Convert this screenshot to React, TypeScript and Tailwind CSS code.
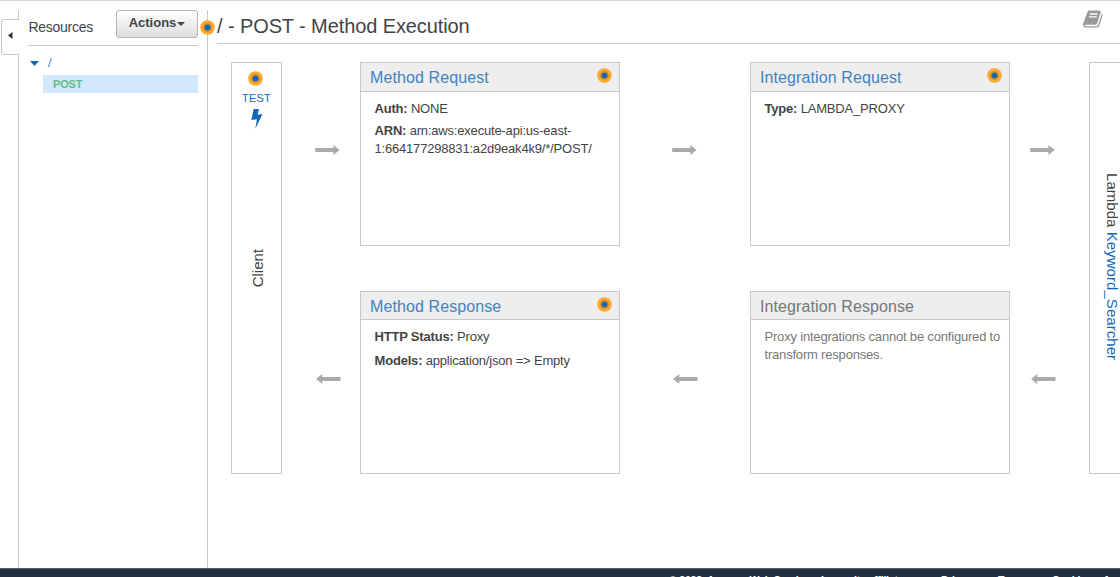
import type { ReactNode } from "react";

function Beacon() {
  return (
    <svg className="block h-[15px] w-[15px] shrink-0" viewBox="0 0 15 15">
      <circle cx="7.5" cy="7.5" r="7.3" fill="#fba930" />
      <circle cx="7.5" cy="7.5" r="4.4" fill="#c98a2c" />
      <circle cx="7.5" cy="7.5" r="2.8" fill="#1166bb" />
    </svg>
  );
}

function Arrow({ left = false }: { left?: boolean }) {
  return (
    <svg className="block h-[10px] w-[25px] shrink-0" viewBox="0 0 25 10">
      <path
        d={left ? "M0 5 6.3 0V3H24.5V7H6.3V10Z" : "M24.7 5 18.4 0V3H.2V7H18.4V10Z"}
        fill="#aaa"
      />
    </svg>
  );
}

function BookIcon() {
  return (
    <svg className="block h-5 w-[21px]" viewBox="0 0 1792 1792" preserveAspectRatio="none" fill="#999">
      <path d="M1639 478q40 57 18 129l-275 906q-19 64-76.5 107.5t-122.5 43.5h-923q-77 0-148.5-53.5t-99.5-131.5q-24-67-2-127 0-4 3-27t4-37q1-8-3-21.5t-3-19.5q2-11 8-21t16.5-23.5 16.5-23.5q23-38 45-91.5t30-91.5q3-10 .5-30t-.5-28q3-11 17-28t17-23q21-36 42-92t25-90q1-9-2.5-32t.5-28q4-13 22-30.5t22-22.5q19-26 42.5-84.5t27.5-96.5q1-8-3-25.5t-2-26.5q2-8 9-18t18-23 17-21q8-12 16.5-30.5t15-35 16-36 19.5-32 26.5-23.5 36-11.5 47.5 5.5l-1 3q38-9 51-9h761q74 0 114 56t18 130l-274 906q-36 119-71.5 153.5t-128.5 34.5h-869q-27 0-38 15-11 16-1 43 24 70 144 70h923q29 0 56-15.5t35-41.5l300-987q7-22 5-57 38 15 59 43zm-1064 2q-4 13 2 22.5t20 9.5h608q13 0 25.5-9.5t16.5-22.5l21-64q4-13-2-22.5t-20-9.5h-608q-13 0-25.5 9.5t-16.5 22.5zm-83 256q-4 13 2 22.5t20 9.5h608q13 0 25.5-9.5t16.5-22.5l21-64q4-13-2-22.5t-20-9.5h-608q-13 0-25.5 9.5t-16.5 22.5z" />
    </svg>
  );
}

function Card({
  title,
  muted = false,
  short = false,
  children,
}: {
  title: string;
  muted?: boolean;
  short?: boolean;
  children: ReactNode;
}) {
  return (
    <section
      className={`flex w-[260px] flex-col border border-[#c8c8c8] ${short ? "h-[183px]" : "h-[184px]"}`}
    >
      <header
        className={`flex shrink-0 justify-between border-b border-[#c8c8c8] bg-[#eee] pr-[7px] pl-[9px] ${short ? "h-7" : "h-[29px]"}`}
      >
        <h2
          className={`pt-[3px] text-[16px] leading-6 tracking-[0.1px] ${muted ? "text-[#777]" : "text-[#4183c4]"}`}
        >
          {title}
        </h2>
        {!muted && (
          <div className="pt-[5px]">
            <Beacon />
          </div>
        )}
      </header>
      <div
        className={`flex flex-col pt-2 pl-[13.5px] text-[13px] leading-[18px] tracking-[-0.19px] ${short ? "gap-[6px]" : "gap-1"} ${muted ? "text-[#777]" : "text-[#444]"}`}
      >
        {children}
      </div>
    </section>
  );
}

export default function App() {
  return (
    <div className="flex h-[577px] w-[1120px] flex-col overflow-hidden border-t border-[#d5d5d5] bg-white font-['Liberation_Sans',Arial,sans-serif] text-[#444]">
      <div className="flex h-[567px] shrink-0 pt-[9px]">
        <div className="flex w-[19px] shrink-0 flex-col">
          <div className="h-[9px] border-r border-[#c8c8c8]" />
          <button className="ml-px flex h-9 items-center rounded-l-[3px] border border-r-0 border-[#c8c8c8] pl-[6px]">
            <svg className="-mt-1 h-[7px] w-[5px]" viewBox="0 0 5 7">
              <path d="M0 3.5 4.5 0V7Z" fill="#333" />
            </svg>
          </button>
          <div className="grow border-r border-[#c8c8c8]" />
        </div>

        <aside className="w-[189px] shrink-0 border-r border-[#c8c8c8] pr-[9px] pl-[9px]">
          <div className="flex h-9 items-start justify-between border-b border-[#c8c8c8]">
            <span className="pt-[7px] pl-[0.5px] text-[14px] leading-5 tracking-[-0.28px]">
              Resources
            </span>
            <button className="flex h-7 w-[82px] items-start justify-center rounded-[3px] border border-[#b5b5b5] bg-linear-to-b from-white to-[#dedede] pt-[3px] text-[13px] leading-[18px] font-bold">
              Actions
              <svg className="mt-2 ml-px h-1 w-2" viewBox="0 0 8 4">
                <path d="M0 0H8L4 4Z" fill="#444" />
              </svg>
            </button>
          </div>
          <div className="flex h-[29px] items-center gap-[9px] pt-[5px] pl-[2px] text-[13px] text-[#4183c4]">
            <svg className="h-[5px] w-[9px]" viewBox="0 0 9 5">
              <path d="M0 0H9L4.5 5Z" fill="#1166bb" />
            </svg>
            /
          </div>
          <div className="ml-[15px] flex h-[18px] items-center bg-[#d1e8ff] pl-[10px] text-[11px] font-bold tracking-[-0.2px] text-[#5fbf83]">
            POST
          </div>
        </aside>

        <main className="flex min-w-0 grow flex-col">
          <div className="relative ml-[9px] flex h-[34px] shrink-0 justify-between border-b border-[#c8c8c8] pr-4">
            <h1 className="pt-1 text-[20px] leading-6 tracking-[-0.1px] whitespace-nowrap">
              / - POST - Method Execution
            </h1>
            <div className="-mt-[1px]">
              <BookIcon />
            </div>
            <div className="absolute top-[10px] -left-[17px]">
              <Beacon />
            </div>
          </div>

          <div className="mt-[18px] flex h-[412px] pl-[23px]">
            <section className="flex w-[51px] shrink-0 flex-col items-center border border-[#c8c8c8] pt-2">
              <div className="-ml-[2px]">
                <Beacon />
              </div>
              <span className="mt-1 text-[11px] leading-4 tracking-[0.2px] text-[#1166bb]">
                TEST
              </span>
              <svg className="mt-[3px] h-5 w-[12px]" viewBox="0 0 12 20">
                <path d="M2.6 0H8L6.6 5.8 11.5 5 4.2 20 6 10.2.4 11Z" fill="#1166bb" />
              </svg>
              <span className="mt-[120px] ml-[2px] rotate-180 text-[15px] leading-4 [writing-mode:vertical-rl]">
                Client
              </span>
            </section>

            <div className="flex w-[78px] shrink-0 flex-col items-start gap-[219px] pt-[83px] pl-[33px]">
              <Arrow />
              <div className="pl-px">
                <Arrow left />
              </div>
            </div>

            <div className="flex shrink-0 flex-col justify-between">
              <Card title="Method Request">
                <p>
                  <b>Auth:</b> NONE
                </p>
                <p>
                  <b>ARN:</b> arn:aws:execute-api:us-east-
                  <br />
                  1:664177298831:a2d9eak4k9/*/POST/
                </p>
              </Card>
              <Card title="Method Response" short>
                <p>
                  <b>HTTP Status:</b> Proxy
                </p>
                <p>
                  <b>Models:</b> application/json =&gt; Empty
                </p>
              </Card>
            </div>

            <div className="flex w-[130px] shrink-0 flex-col items-start gap-[219px] pt-[83px] pl-[52px]">
              <Arrow />
              <div className="pl-px">
                <Arrow left />
              </div>
            </div>

            <div className="flex shrink-0 flex-col justify-between">
              <Card title="Integration Request">
                <p>
                  <b>Type:</b> LAMBDA_PROXY
                </p>
              </Card>
              <Card title="Integration Response" muted short>
                <p>
                  Proxy integrations cannot be configured to
                  <br />
                  transform responses.
                </p>
              </Card>
            </div>

            <div className="flex w-[79px] shrink-0 flex-col items-start gap-[219px] pt-[83px] pl-5">
              <Arrow />
              <div className="pl-px">
                <Arrow left />
              </div>
            </div>

            <section className="w-[51px] shrink-0 border border-[#c8c8c8] pt-[110px] pl-[14px]">
              <span className="text-[15px] leading-4 tracking-[0.05px] whitespace-nowrap [writing-mode:vertical-rl]">
                Lambda <span className="text-[#1166bb]">Keyword_Searcher</span>
              </span>
            </section>
          </div>
        </main>
      </div>

      <footer className="flex h-[30px] shrink-0 border-t border-[#555f6b] bg-[#232f3e] pt-1 pl-[669px] text-[10.5px] leading-[14px] font-bold whitespace-nowrap text-white">
        <span className="w-[272px] shrink-0 tracking-[-0.18px]">
          © 2022, Amazon Web Services, Inc. or its affiliates.
        </span>
        <span className="w-[57px] shrink-0">Privacy</span>
        <span className="w-[54px] shrink-0">Terms</span>
        <span className="shrink-0 tracking-[-0.2px]">Cookie preferences</span>
      </footer>
    </div>
  );
}
